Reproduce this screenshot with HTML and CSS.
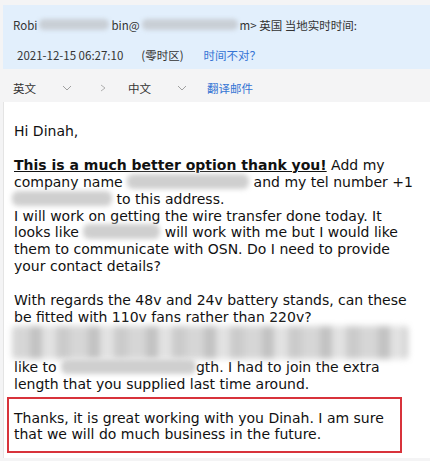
FILE: index.html
```html
<!DOCTYPE html>
<html lang="zh-CN">
<head>
    <meta charset="UTF-8">
    <meta name="viewport" content="width=device-width, initial-scale=1.0">
    <title>邮件</title>
    <link rel="stylesheet" href="styles.css">
</head>
<body>
    <div class="mail">
        <div class="info">
            <div class="info-row">
                <span>Robi</span><span class="blur-h w65"></span><span>bin@</span><span class="blur-h w92"></span><span>m&gt; 英国 当地实时时间:</span>
            </div>
            <div class="info-row second">
                <span class="date">2021-12-15 06:27:10</span>
                <span class="zone">(零时区)</span>
                <a class="link" href="#">时间不对？</a>
            </div>
        </div>

        <div class="translate">
            <span>英文</span>
            <svg class="chev" width="10" height="6" viewBox="0 0 10 6"><path d="M1 1 L5 5 L9 1" fill="none" stroke="#a0a0a0" stroke-width="1"/></svg>
            <svg class="arrow" width="6" height="8" viewBox="0 0 6 8"><path d="M1 1 L5 4 L1 7" fill="none" stroke="#b0b0b0" stroke-width="1"/></svg>
            <span>中文</span>
            <svg class="chev" width="10" height="6" viewBox="0 0 10 6"><path d="M1 1 L5 5 L9 1" fill="none" stroke="#a0a0a0" stroke-width="1"/></svg>
            <a class="link" href="#">翻译邮件</a>
        </div>

        <div class="content">
            <p>Hi Dinah,</p>
            <p><b class="hl">This is a much better option thank you!</b> Add my<br>company name <span class="blur w128"></span> and my tel number +1<br><span class="blur w100 lead"></span> to this address.<br>I will work on getting the wire transfer done today. It<br>looks like <span class="blur w86"></span> will work with me but I would like<br>them to communicate with OSN. Do I need to provide<br>your contact details?</p>
            <p>With regards the 48v and 24v battery stands, can these<br>be fitted with 110v fans rather than 220v?<br><span class="mosaic"></span>like to <span class="blur w134"></span>gth. I had to join the extra<br>length that you supplied last time around.</p>
            <div class="note">
                <p>Thanks, it is great working with you Dinah. I am sure<br>that we will do much business in the future.</p>
            </div>
        </div>
    </div>
</body>
</html>
```

FILE: styles.css
```css
body {
    margin: 0;
    background: #f4f4f5;
    font-family: "Noto Sans CJK SC", "Noto Sans", sans-serif;
}

.mail {
    margin: 5px 0 0 3px;
}

.info {
    background: #e2effc;
    height: 64px;
    padding-left: 10px;
    font-size: 11.5px;
    color: #333;
}

.info-row {
    display: flex;
    align-items: center;
    height: 31px;
    padding-top: 4px;
}

.info-row.second {
    height: 26px;
    padding-top: 2px;
    padding-left: 4px;
}

.zone {
    margin-left: 18px;
}

.info-row .link {
    margin-left: 20px;
}

.link {
    color: #3574d4;
    text-decoration: none;
}

.blur-h {
    display: inline-block;
    height: 11px;
    background: #c9cfd6;
    border-radius: 5px;
    filter: blur(2px);
    margin: 0 2px;
}

.w65 { width: 70px; }
.w92 { width: 96px; }

.translate {
    display: flex;
    align-items: center;
    height: 28px;
    padding: 5px 0 0 10px;
    font-size: 11.5px;
    color: #333;
}

.chev {
    margin: 0 27px 0 26px;
}

.arrow {
    margin-right: 22px;
    margin-left: 1px;
}

.translate .link {
    margin-left: -7px;
}

.content {
    background: #fff;
    border-left: 1px solid #e4e4e4;
    padding: 21px 0 5px 3px;
    font-family: "DejaVu Sans", Verdana, sans-serif;
    font-size: 14px;
    line-height: 16.9px;
    color: #111;
}

.content p {
    margin: 0 0 16.9px;
    padding-left: 7px;
    white-space: nowrap;
}

.hl {
    text-decoration: underline;
}

.blur {
    display: inline-block;
    height: 15px;
    vertical-align: -2px;
    background: #cfcfcf;
    border-radius: 6px;
    filter: blur(2.5px);
}

.w128 { width: 122px; }
.w100 { width: 100px; }
.w86 { width: 77px; }
.w134 { width: 135px; }

.lead {
    margin-left: -2px;
}

.mosaic {
    display: block;
    width: 396px;
    height: 33px;
    margin-left: -2px;
    background:
        repeating-linear-gradient(90deg, #d6d6d6 0 18px, #c2c2c2 18px 30px, #e2e2e2 30px 44px, #cbcbcb 44px 58px);
    filter: blur(3px);
    border-radius: 4px;
}

.note {
    margin: -13px 28px 0 0;
    border: 2px solid #d8333b;
    padding: 11px 0 8px;
}

.note p {
    margin: 0;
    padding-left: 5px;
}
```
